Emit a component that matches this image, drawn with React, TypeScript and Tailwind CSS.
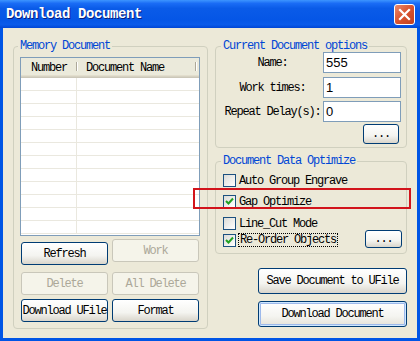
import React from "react";

const F = "font-mono text-[12px] tracking-[-1.2px] leading-[12px]";

function Btn({
  children,
  className = "",
  disabled = false,
  def = false,
}: {
  children: React.ReactNode;
  className?: string;
  disabled?: boolean;
  def?: boolean;
}) {
  const base = "flex items-center justify-center rounded-[3px] border whitespace-nowrap " + F;
  const look = disabled
    ? "border-[#C9C7BA] bg-[#F5F4EA] text-[#ACA899]"
    : def
    ? "border-[#003C74] text-black bg-[linear-gradient(to_bottom,#FFFFFF,#F4F4F0_60%,#E3E1D8)] shadow-[inset_0_0_0_1px_#CEE7FF,inset_0_0_0_2px_#9DB9EB]"
    : "border-[#003C74] text-black bg-[linear-gradient(to_bottom,#FFFFFF,#F4F4F0_60%,#D9D5CB)]";
  return <div className={base + " " + look + " " + className}>{children}</div>;
}

function Check({ checked }: { checked: boolean }) {
  return (
    <div className="w-[13px] h-[13px] shrink-0 border border-[#1C5180] bg-[linear-gradient(135deg,#DCDCD7,#FFFFFF)] flex items-center justify-center">
      {checked && (
        <svg width="11" height="11" viewBox="0 0 11 11">
          <polyline points="2,5 4.5,7.5 9,2.5" fill="none" stroke="#21A121" strokeWidth="2" />
        </svg>
      )}
    </div>
  );
}

function Input({ value }: { value: string }) {
  return (
    <div className="w-[78px] h-[21px] border border-[#7F9DB9] bg-white flex items-center pl-[2px] font-['Liberation_Sans'] text-[13px] text-black">
      {value}
    </div>
  );
}

export default function App() {
  const rows = Array.from({ length: 12 });
  return (
    <div className="relative w-[420px] h-[341px] flex flex-col bg-[#0055E5] overflow-hidden">
      {/* title bar */}
      <div className="h-[28px] shrink-0 flex items-center justify-between pl-[6px] pr-[5px] bg-[linear-gradient(to_bottom,#3D95FF_0%,#1A6CF5_12%,#0A5BE8_30%,#0556E6_70%,#0A5BEA_88%,#0046D5_100%)]">
        <span className="font-mono font-bold text-[14px] tracking-[-0.4px] text-white [text-shadow:1px_1px_0_#0A1E7A]">
          Download Document
        </span>
        <div className="w-[21px] h-[21px] rounded-[3px] border border-white bg-[linear-gradient(135deg,#E98A6E,#D8532F_50%,#C1401F)] flex items-center justify-center">
          <svg width="13" height="13" viewBox="0 0 13 13">
            <path d="M2 2 L11 11 M11 2 L2 11" stroke="white" strokeWidth="2.2" strokeLinecap="square" />
          </svg>
        </div>
      </div>

      {/* body */}
      <div className="flex-1 mx-[3px] mb-[3px] bg-[#ECE9D8] flex gap-[7px] px-[10px] pt-[12px]">
        {/* Memory Document group */}
        <fieldset className="w-[195px] self-start border border-[#D0D0BF] rounded-[4px] p-0 m-0 min-w-0">
          <legend className={"ml-[4px] px-[2px] text-[#0046D5] " + F}>Memory Document</legend>
          <div className="pl-[6px] pt-[5px] pb-[6px]">
            {/* list view */}
            <div className="w-[180px] h-[179px] border border-[#7F9DB9] bg-white flex flex-col overflow-hidden">
              <div className="h-[20px] shrink-0 flex bg-[#EBEADB] shadow-[inset_0_-1px_0_#CBC7B8,inset_0_-2px_0_#D6D2C2,inset_0_-3px_0_#E2DECD] pb-[3px] text-black">
                <div className={"w-[55px] flex items-center pl-[10px] pt-[3px] " + F}>Number</div>
                <div className="w-[2px] my-[4px] border-l border-[#ACA899] border-r border-r-white" />
                <div className={"w-[117px] flex items-center pl-[8px] pt-[3px] " + F}>Document Name</div>
                <div className="w-[2px] my-[4px] border-l border-[#ACA899] border-r border-r-white" />
                <div className="flex-1" />
              </div>
              {rows.map((_, i) => (
                <div key={i} className="h-[13px] shrink-0 flex border-b border-[#EAE8DF]">
                  <div className="w-[56px] border-r border-[#EAE8DF]" />
                  <div className="flex-1" />
                </div>
              ))}
            </div>
            {/* buttons */}
            <div className="flex items-start gap-[4px] pl-[1px] mt-[3px]">
              <Btn className="w-[87px] h-[23px] mt-[3px]">Refresh</Btn>
              <Btn disabled className="w-[87px] h-[23px]">Work</Btn>
            </div>
            <div className="flex gap-[4px] pl-[1px] mt-[7px]">
              <Btn disabled className="w-[87px] h-[23px]">Delete</Btn>
              <Btn disabled className="w-[87px] h-[23px]">All Delete</Btn>
            </div>
            <div className="flex gap-[4px] pl-[1px] mt-[4px]">
              <Btn className="w-[87px] h-[23px]">Download UFile</Btn>
              <Btn className="w-[87px] h-[23px]">Format</Btn>
            </div>
          </div>
        </fieldset>

        {/* right column */}
        <div className="w-[192px] flex flex-col">
          <fieldset className="border border-[#D0D0BF] rounded-[4px] p-0 m-0 min-w-0">
            <legend className={"ml-[5px] px-[2px] text-[#0046D5] " + F}>Current Document options</legend>
            <div className="pl-[6px] pb-[3px] flex flex-col">
              <div className="flex items-center">
                <div className={"w-[101px] text-center text-black " + F}>Name:</div>
                <Input value="555" />
              </div>
              <div className="flex items-center mt-[4px]">
                <div className={"w-[101px] text-center text-black " + F}>Work times:</div>
                <Input value="1" />
              </div>
              <div className="flex items-center mt-[3px]">
                <div className={"w-[101px] text-center text-black " + F}>Repeat Delay(s):</div>
                <Input value="0" />
              </div>
              <div className="flex justify-end pr-[7px] mt-[2px]">
                <Btn className="w-[36px] h-[20px]">...</Btn>
              </div>
            </div>
          </fieldset>

          <fieldset className="mt-[7px] border border-[#D0D0BF] rounded-[4px] p-0 m-0 min-w-0">
            <legend className={"ml-[5px] px-[2px] text-[#0046D5] " + F}>Document Data Optimize</legend>
            <div className="pl-[7px] pt-[7px] pb-[5px] flex flex-col text-black">
              <div className="flex items-center h-[13px]">
                <Check checked={false} />
                <span className={"ml-[3px] " + F}>Auto Group Engrave</span>
              </div>
              <div className="flex items-center h-[13px] mt-[8px]">
                <Check checked={true} />
                <span className={"ml-[3px] " + F}>Gap Optimize</span>
              </div>
              <div className="flex items-center h-[13px] mt-[9px]">
                <Check checked={false} />
                <span className={"ml-[3px] " + F}>Line_Cut Mode</span>
              </div>
              <div className="flex items-start h-[18px]">
                <div className="mt-[4px]">
                  <Check checked={true} />
                </div>
                <span className={"ml-[3px] mt-[4px] outline outline-1 outline-dotted outline-black px-[1px] " + F}>
                  Re-Order Objects
                </span>
                <div className="flex-1" />
                <Btn className="w-[37px] h-[18px] mr-[4px]">...</Btn>
              </div>
            </div>
          </fieldset>

          <div className="flex flex-col items-end mt-[14px]">
            <Btn className="w-[149px] h-[26px]">Save Document to UFile</Btn>
            <Btn def className="w-[149px] h-[26px] mt-[7px]">Download Document</Btn>
          </div>
        </div>
      </div>

      {/* red annotation rectangle */}
      <div className="absolute left-[193px] top-[188px] w-[218px] h-[21px] border-2 border-[#D2141B] pointer-events-none" />
    </div>
  );
}
